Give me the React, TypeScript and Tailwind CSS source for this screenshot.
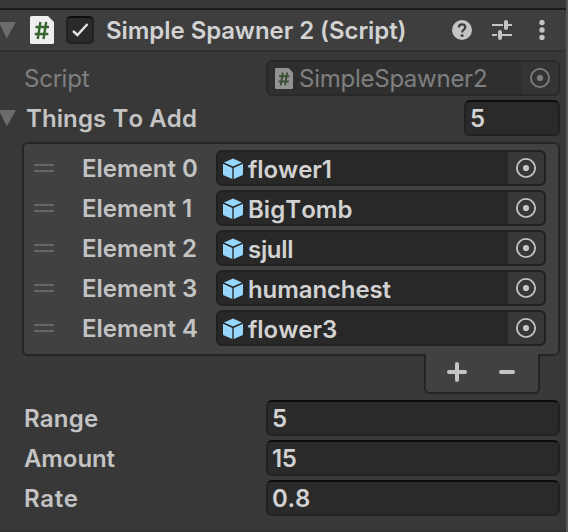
import React from "react";

function Foldout() {
  return (
    <svg className="block h-4 w-4 shrink-0" viewBox="0 0 16 16">
      <path d="M-1 0H16L7 16L6 15Z" fill="#6c6c6c" />
    </svg>
  );
}

function ScriptIcon({ className }: { className: string }) {
  return (
    <svg className={className} viewBox="0 0 24 28">
      <path d="M1.5 0H18L24 6V26.500Q24 28 22.500 28H1.500Q0 28 0 26.500V1.500Q0 0 1.500 0Z" fill="#eeeeee" />
      <path d="M10.400 6L7.700 23M16.200 6L13.500 23M5.500 11H19M4.800 18H18.300" stroke="#35652c" strokeWidth="2.400" fill="none" />
    </svg>
  );
}

function CubeIcon() {
  return (
    <svg className="mt-[1.5px] block h-[22px] w-5 shrink-0" viewBox="0 0 20 22">
      <path d="M10 .5L19 4.500L10 8.500L1 4.500Z" fill="#96d7fb" />
      <path d="M0 5.700L9.300 9.900V21L.6 17.200Q0 16.900 0 16.200Z" fill="#96d7fb" />
      <path d="M20 5.700L10.700 9.900V21L19.400 17.200Q20 16.900 20 16.200Z" fill="#96d7fb" />
    </svg>
  );
}

function Picker() {
  return (
    <svg className="block h-5 w-5" viewBox="0 0 20 20">
      <circle cx="10" cy="10" r="9.100" fill="none" stroke="#c4c4c4" strokeWidth="1.800" />
      <circle cx="10" cy="10" r="3.100" fill="#c4c4c4" />
    </svg>
  );
}

function NumberField({ value, className }: { value: string; className: string }) {
  return (
    <div className={`flex h-9 items-center rounded-md border-2 border-[#212121] border-t-[#0d0d0d] bg-[#2a2a2a] pl-1 text-[#d2d2d2] ${className}`}>
      <span className="pt-0.5 tracking-[-0.3px]">{value}</span>
    </div>
  );
}

const elements = [
  { name: "flower1", tracking: "tracking-[-0.05px]" },
  { name: "BigTomb", tracking: "tracking-[0.05px]" },
  { name: "sjull", tracking: "tracking-[-0.3px]" },
  { name: "humanchest", tracking: "tracking-[-0.1px]" },
  { name: "flower3", tracking: "tracking-[0px]" },
];

const values = [
  { label: "Range", value: "5", tracking: "tracking-[0.2px]" },
  { label: "Amount", value: "15", tracking: "tracking-[-0.1px]" },
  { label: "Rate", value: "0.8", tracking: "tracking-[0.6px]" },
];

export default function App() {
  return (
    <div className="h-[532px] w-[568px] overflow-hidden border-r-2 border-[#585858] bg-[#383838] font-['Inter',sans-serif] text-[24px] leading-8 font-semibold tracking-[0px] [font-kerning:none] whitespace-nowrap text-[#c4c4c4]">
      <header className="mt-2 flex h-11 items-center border-t-2 border-b-2 border-t-[#1a1a1a] border-b-[#303030] bg-[#3e3e3e]">
        <Foldout />
        <ScriptIcon className="ml-3.5 block h-7 w-6" />
        <div className="ml-3 flex h-7 w-7 items-center justify-center rounded-[5px] border-2 border-[#212121] border-t-[#0d0d0d] bg-[#2a2a2a]">
          <svg className="block h-5 w-5" viewBox="0 0 20 20">
            <path d="M3 11L7.500 15L17.500 4" fill="none" stroke="#e4e4e4" strokeWidth="2.400" />
          </svg>
        </div>
        <h1 className="ml-3 w-[346px] pt-px tracking-[-0.05px] text-[#d2d2d2]">Simple Spawner 2 (Script)</h1>
        <svg className="block h-5 w-5" viewBox="0 0 20 20">
          <circle cx="10" cy="10" r="10" fill="#c4c4c4" />
          <path d="M6.800 7.600Q6.800 4.300 10.100 4.300Q13.300 4.300 13.300 7Q13.300 8.600 11.600 9.800Q10.100 10.900 10.100 12.600" fill="none" stroke="#3e3e3e" strokeWidth="2.200" />
          <circle cx="10.100" cy="15.500" r="1.500" fill="#3e3e3e" />
        </svg>
        <svg className="ml-5 block h-5 w-5" viewBox="0 0 20 20">
          <path d="M0 5H11M16 5H20M0 15H5M10 15H20" stroke="#c4c4c4" strokeWidth="2" />
          <path d="M14 2V8M8 12V18" stroke="#c4c4c4" strokeWidth="4" strokeLinecap="round" />
        </svg>
        <svg className="ml-[27px] block h-5 w-[6px]" viewBox="0 0 6 20">
          <circle cx="3" cy="2.500" r="2.700" fill="#c4c4c4" />
          <circle cx="3" cy="10" r="2.700" fill="#c4c4c4" />
          <circle cx="3" cy="17.500" r="2.700" fill="#c4c4c4" />
        </svg>
      </header>

      <main className="pt-2 pr-1.5">
        <div className="flex h-9 items-center font-normal opacity-50">
          <span className="w-[266px] pl-6 pt-px tracking-[-0.2px]">Script</span>
          <div className="flex h-9 flex-1 items-center rounded-md border-2 border-[#1b1b1b] bg-[#282828] pl-[7px]">
            <ScriptIcon className="block h-[21px] w-[18px]" />
            <span className="ml-1.5 flex-1 pt-0.5 tracking-[-0.25px]">SimpleSpawner2</span>
            <div className="flex h-8 w-9 items-center justify-center rounded-r bg-[#323232]"><Picker /></div>
          </div>
        </div>

        <div className="mt-1 flex h-9 items-center">
          <Foldout />
          <h2 className="ml-2.5 flex-1 pt-0.5 tracking-[0.1px]">Things To Add</h2>
          <NumberField value="5" className="w-24" />
        </div>

        <div className="mt-1.5 ml-[22px]">
          <div className="flex h-[214px] flex-col gap-1 rounded-md border-2 border-[#242424] bg-[#414141] pt-1.5 pr-3 pl-2.5">
            {elements.map(({ name, tracking }, i) => (
              <div key={name} className="flex h-9 items-center">
                <div className="h-2 w-5 border-y-2 border-[#666666]" />
                <span className="ml-7 w-[134px] pt-0.5">Element {i}</span>
                <div className="flex h-9 flex-1 items-center rounded-md border-2 border-[#212121] bg-[#282828] pl-[5px] text-[#d2d2d2]">
                  <CubeIcon />
                  <span className={`ml-[5px] flex-1 pt-[3px] ${tracking}`}>{name}</span>
                  <div className="flex h-8 w-9 items-center justify-center rounded-r bg-[#373737]"><Picker /></div>
                </div>
              </div>
            ))}
          </div>
          <div className="relative -mt-0.5 mr-5 ml-auto flex h-10 w-[116px] items-center rounded-b-md border-2 border-t-0 border-[#242424] bg-[#414141] pb-0.5 pl-[21px]">
            <svg className="block h-5 w-5" viewBox="0 0 20 20">
              <path d="M2 10H18M10 2V18" stroke="#c4c4c4" strokeWidth="4" strokeLinecap="round" />
            </svg>
            <svg className="ml-8 block h-5 w-4" viewBox="0 0 16 20">
              <path d="M2 10H14" stroke="#c4c4c4" strokeWidth="4" strokeLinecap="round" />
            </svg>
          </div>
        </div>

        <div className="mt-1.5 flex flex-col gap-1">
          {values.map(({ label, value, tracking }) => (
            <div key={label} className="flex h-9 items-center">
              <span className={`w-[266px] pl-6 pt-0.5 ${tracking}`}>{label}</span>
              <NumberField value={value} className="flex-1" />
            </div>
          ))}
        </div>
      </main>
      <div className="mt-3.5 h-0.5 bg-[#303030]" />
    </div>
  );
}
